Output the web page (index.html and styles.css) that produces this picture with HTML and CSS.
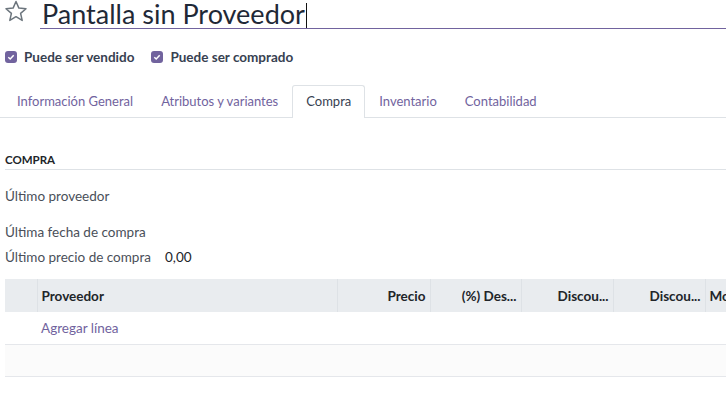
FILE: index.html
```html
<!DOCTYPE html>
<html lang="es">
<head>
    <meta charset="UTF-8">
    <meta name="viewport" content="width=device-width, initial-scale=1.0">
    <title>Pantalla sin Proveedor</title>
    <link rel="stylesheet" href="styles.css">
</head>
<body>
    <div class="sheet">
        <div class="title-row">
            <svg class="star" width="24" height="22" viewBox="0 0 24 22">
                <path d="M12 1.5 L14.9 8.1 L22 8.7 L16.6 13.4 L18.2 20.4 L12 16.7 L5.8 20.4 L7.4 13.4 L2 8.7 L9.1 8.1 Z" fill="none" stroke="#6c757d" stroke-width="1.5" stroke-linejoin="round"/>
            </svg>
            <div class="title-field">
                <span class="title">Pantalla sin Proveedor</span><span class="caret"></span>
            </div>
        </div>

        <div class="options">
            <label class="check"><span class="box"><svg width="8" height="8" viewBox="0 0 8 8"><path d="M1.3 4.2 L3.2 6 L6.7 2.2" fill="none" stroke="#fff" stroke-width="1.5"/></svg></span>Puede ser vendido</label>
            <label class="check"><span class="box"><svg width="8" height="8" viewBox="0 0 8 8"><path d="M1.3 4.2 L3.2 6 L6.7 2.2" fill="none" stroke="#fff" stroke-width="1.5"/></svg></span>Puede ser comprado</label>
        </div>

        <ul class="tabs">
            <li class="tab">Información General</li>
            <li class="tab">Atributos y variantes</li>
            <li class="tab active">Compra</li>
            <li class="tab">Inventario</li>
            <li class="tab">Contabilidad</li>
        </ul>

        <div class="group">
            <div class="group-title">COMPRA</div>
            <div class="field first">Último proveedor</div>
            <div class="field">Última fecha de compra</div>
            <div class="field pair"><span class="label">Último precio de compra</span><span class="value">0,00</span></div>
        </div>

        <table class="lines">
            <colgroup>
                <col style="width: 32px">
                <col style="width: 300px">
                <col style="width: 93px">
                <col style="width: 91px">
                <col style="width: 92px">
                <col style="width: 92px">
                <col style="width: 90px">
            </colgroup>
            <thead>
                <tr>
                    <th></th>
                    <th class="left">Proveedor</th>
                    <th>Precio</th>
                    <th>(%) Des...</th>
                    <th>Discou...</th>
                    <th>Discou...</th>
                    <th class="left">Moneda</th>
                </tr>
            </thead>
            <tbody>
                <tr class="add">
                    <td></td>
                    <td colspan="6"><a href="#">Agregar línea</a></td>
                </tr>
                <tr class="empty">
                    <td colspan="7"></td>
                </tr>
            </tbody>
        </table>
    </div>
</body>
</html>
```

FILE: styles.css
```css
body {
    margin: 0;
    font-family: Lato, "Noto Sans", sans-serif;
    font-size: 13.5px;
    color: #4a4f59;
    background: #fff;
    overflow: hidden;
}
.sheet {
    width: 726px;
    overflow: hidden;
}
.title-row {
    display: flex;
    align-items: flex-start;
    height: 29px;
}
.star {
    margin: 0 0 0 4px;
    flex: none;
}
.title-field {
    flex: 1;
    margin-left: 12px;
    height: 28px;
    border-bottom: 1px solid #71639e;
    display: flex;
    align-items: flex-end;
}
.title {
    font-size: 27px;
    line-height: 28px;
    color: #1f2937;
    padding-left: 2px;
    margin-bottom: 0;
}
.caret {
    width: 1px;
    height: 25px;
    background: #111;
    margin-left: 1px;
}
.options {
    display: flex;
    gap: 17px;
    padding: 21px 0 0 5px;
    height: 14px;
}
.check {
    display: flex;
    align-items: center;
    gap: 7px;
    font-weight: bold;
    color: #374151;
}
.box {
    width: 12px;
    height: 12px;
    border-radius: 3px;
    background: #71639e;
    display: flex;
    align-items: center;
    justify-content: center;
}
.tabs {
    list-style: none;
    display: flex;
    margin: 21px 0 0;
    padding: 0 0 0 3px;
    height: 32px;
    border-bottom: 1px solid #dee2e6;
    font-size: 13px;
}
.tab {
    padding: 0 13px;
    line-height: 30px;
    border: 1px solid transparent;
    border-bottom: none;
    border-radius: 3px 3px 0 0;
    color: #71639e;
}
.tab.active {
    border-color: #dee2e6;
    background: #fff;
    color: #374151;
    margin-bottom: -1px;
    height: 32px;
}
.group {
    margin-top: 35px;
    padding-left: 5px;
}
.group-title {
    font-size: 11.5px;
    font-weight: bold;
    color: #212529;
    line-height: 14px;
    padding-bottom: 2px;
    border-bottom: 1px solid #dee2e6;
}
.field {
    line-height: 18px;
    margin-top: 7px;
    color: #4a4f59;
}
.field.first {
    margin-top: 17px;
    margin-bottom: 18px;
}
.pair {
    display: flex;
}
.label {
    width: 160px;
}
.value {
    color: #212529;
}
.lines {
    margin: 13px 0 0 5px;
    border-collapse: collapse;
    table-layout: fixed;
    width: 790px;
}
.lines th {
    background: #e9ecef;
    height: 33px;
    padding: 0 4px;
    text-align: right;
    font-weight: bold;
    color: #212529;
    border-left: 1px solid #dee2e6;
    white-space: nowrap;
    overflow: hidden;
}
.lines th:first-child {
    border-left: none;
}
.lines th.left {
    text-align: left;
}
.lines td {
    height: 32px;
    padding: 0 4px;
    border-bottom: 1px solid #e5e7eb;
}
.lines a {
    color: #71639e;
    text-decoration: none;
}
.empty td {
    background: #fbfbfb;
    height: 31px;
}
```
